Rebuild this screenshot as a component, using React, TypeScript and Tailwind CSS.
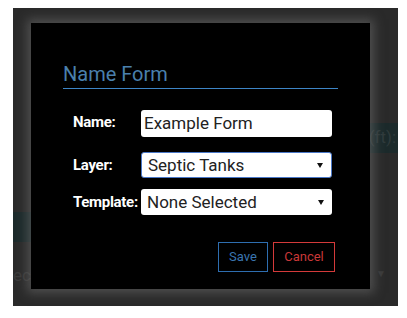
import React from "react";

const Arrow = () => (
    <svg width="6" height="5" viewBox="0 0 6 5" className="shrink-0">
        <polygon points="0,0 6,0 3,5" fill="#111"/>
    </svg>
);

const SelectBox = ({value, focused}: { value: string; focused?: boolean }) => (
    <div
        className={`flex h-[26px] w-[191px] items-center justify-between rounded-[3px] bg-white pl-[6px] pr-[8px] text-[17px] text-[#222] ${focused ? "border border-[#4a78c8]" : ""}`}>
        <span className="leading-none">{value}</span>
        <Arrow/>
    </div>
);

export default function App() {
    return (
        <div className="min-h-screen bg-white pt-[8px] pl-[13px]" style={{fontFamily: "Roboto, 'Noto Sans', sans-serif"}}>
            <div className="relative h-[298px] w-[385px] bg-[#2a2a2a] pt-[15px] pl-[18px]">
                {/* dimmed page behind the overlay */}
                <div className="absolute left-0 top-[204px] h-[30px] w-[18px] bg-[#1c2a2b]"/>
                <div className="absolute right-0 top-[115px] flex h-[30px] w-[32px] items-center justify-end bg-[#1c2a2b] pr-[2px] text-[17px] text-[#2f3a3b]">
                    (ft):
                </div>
                <div className="absolute left-0 top-[255px] flex items-center gap-[12px] text-[17px] text-[#3a3a3a]">
                    <span>ected</span>
                    <span className="text-[10px]">▼</span>
                </div>
                <div className="absolute right-[12px] top-[258px] text-[10px] text-[#3a3a3a]">▼</div>

                <div className="relative h-[266px] w-[339px] bg-black px-[32px] pt-[39px] shadow-[0_0_10px_4px_rgba(110,110,110,0.55)]">
                    <div className="border-b border-[#3d85c6] pb-[2px] text-[20px] leading-[24px] text-[#4a80ad]">
                        Name Form
                    </div>

                    <div className="ml-[10px] mt-[21px] flex items-center">
                        <span className="mb-[4px] w-[68px] text-[15px] font-bold leading-[20px] tracking-[-0.3px] text-white">Name:</span>
                        <div className="flex h-[27px] w-[191px] items-center rounded-[3px] bg-white pl-[3px] text-[17px] leading-none text-[#222]">
                            Example Form
                        </div>
                    </div>

                    <div className="ml-[10px] mt-[15px] flex items-center">
                        <span className="w-[68px] text-[15px] font-bold leading-[20px] tracking-[-0.3px] text-white">Layer:</span>
                        <SelectBox value="Septic Tanks" focused/>
                    </div>

                    <div className="ml-[10px] mt-[11px] flex items-center">
                        <span className="w-[68px] text-[15px] font-bold leading-[20px] tracking-[-0.3px] text-white">Template:</span>
                        <SelectBox value="None Selected"/>
                    </div>

                    <div className="mt-[27px] flex justify-end gap-[5px] pr-[3px]">
                        <button className="flex h-[30px] w-[50px] items-center justify-center border border-[#2e6eb0] text-[13px] text-[#3a76b0]">
                            Save
                        </button>
                        <button className="flex h-[30px] w-[62px] items-center justify-center border border-[#d43a3a] text-[13px] text-[#c93838]">
                            Cancel
                        </button>
                    </div>
                </div>
            </div>
        </div>
    );
}
